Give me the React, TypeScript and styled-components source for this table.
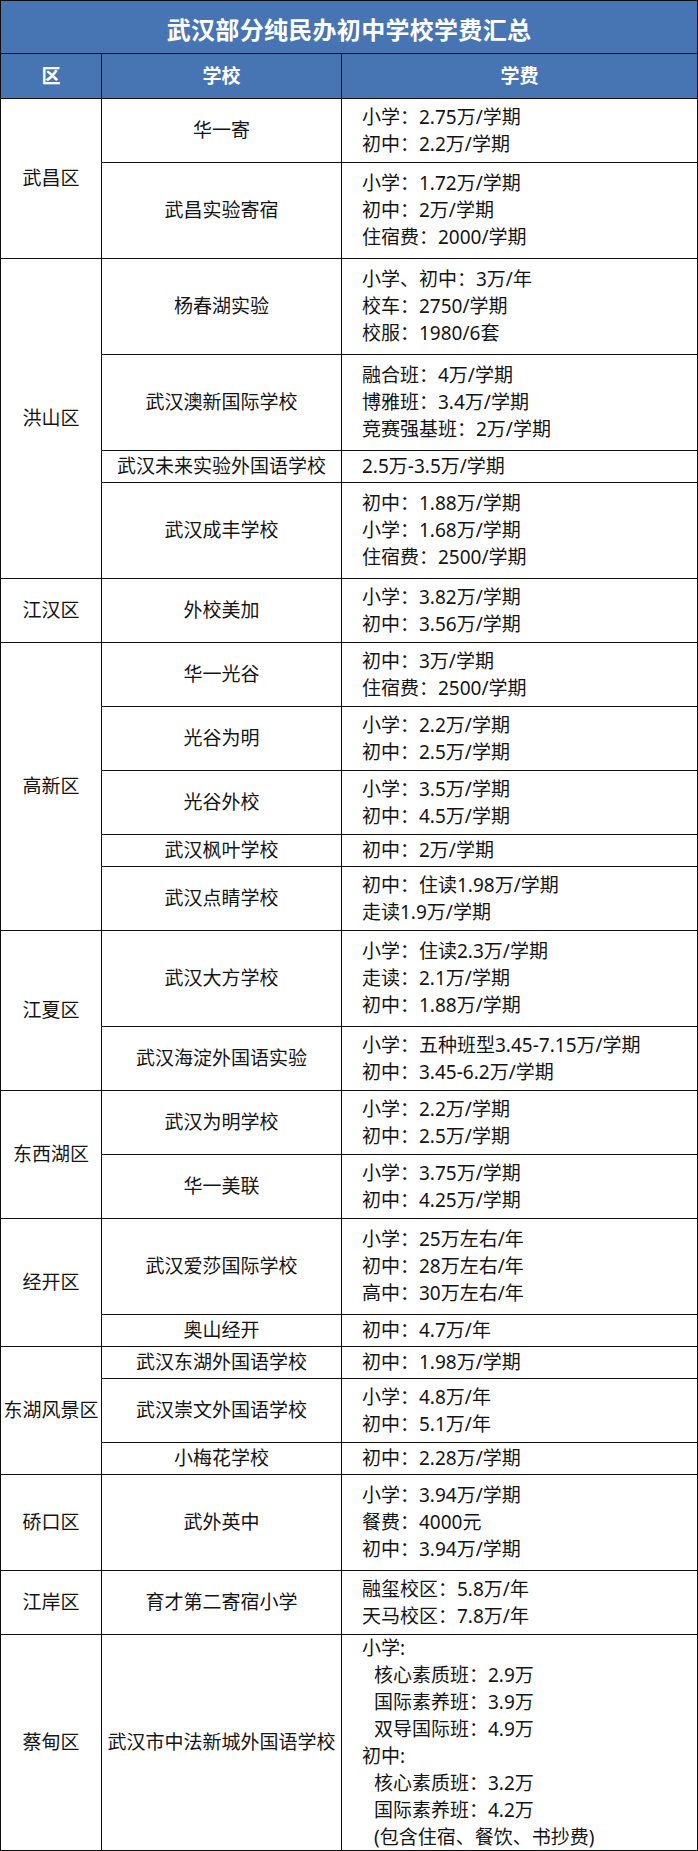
import React from "react";
import styled, { createGlobalStyle } from "styled-components";

const GlobalStyle = createGlobalStyle`
  html, body {
    margin: 0;
    padding: 0;
    background: #ffffff;
  }
  body {
    font-family: "Noto Sans", "Noto Sans CJK SC", sans-serif;
  }
`;

type School = {
  name: string;
  fees: string[];
  h: number; // row height incl. grid line, px
  tight?: boolean;
};

type District = {
  name: string;
  schools: School[];
};

const data: District[] = [
  {
    name: "武昌区",
    schools: [
      { name: "华一寄", fees: ["小学：2.75万/学期", "初中：2.2万/学期"], h: 64 },
      { name: "武昌实验寄宿", fees: ["小学：1.72万/学期", "初中：2万/学期", "住宿费：2000/学期"], h: 96 },
    ],
  },
  {
    name: "洪山区",
    schools: [
      { name: "杨春湖实验", fees: ["小学、初中：3万/年", "校车：2750/学期", "校服：1980/6套"], h: 96 },
      { name: "武汉澳新国际学校", fees: ["融合班：4万/学期", "博雅班：3.4万/学期", "竞赛强基班：2万/学期"], h: 96 },
      { name: "武汉未来实验外国语学校", fees: ["2.5万-3.5万/学期"], h: 32 },
      { name: "武汉成丰学校", fees: ["初中：1.88万/学期", "小学：1.68万/学期", "住宿费：2500/学期"], h: 96 },
    ],
  },
  {
    name: "江汉区",
    schools: [{ name: "外校美加", fees: ["小学：3.82万/学期", "初中：3.56万/学期"], h: 64 }],
  },
  {
    name: "高新区",
    schools: [
      { name: "华一光谷", fees: ["初中：3万/学期", "住宿费：2500/学期"], h: 64 },
      { name: "光谷为明", fees: ["小学：2.2万/学期", "初中：2.5万/学期"], h: 64 },
      { name: "光谷外校", fees: ["小学：3.5万/学期", "初中：4.5万/学期"], h: 64 },
      { name: "武汉枫叶学校", fees: ["初中：2万/学期"], h: 32 },
      { name: "武汉点睛学校", fees: ["初中：住读1.98万/学期", "走读1.9万/学期"], h: 64 },
    ],
  },
  {
    name: "江夏区",
    schools: [
      { name: "武汉大方学校", fees: ["小学：住读2.3万/学期", "走读：2.1万/学期", "初中：1.88万/学期"], h: 96 },
      { name: "武汉海淀外国语实验", fees: ["小学：五种班型3.45-7.15万/学期", "初中：3.45-6.2万/学期"], h: 64 },
    ],
  },
  {
    name: "东西湖区",
    schools: [
      { name: "武汉为明学校", fees: ["小学：2.2万/学期", "初中：2.5万/学期"], h: 64 },
      { name: "华一美联", fees: ["小学：3.75万/学期", "初中：4.25万/学期"], h: 64 },
    ],
  },
  {
    name: "经开区",
    schools: [
      { name: "武汉爱莎国际学校", fees: ["小学：25万左右/年", "初中：28万左右/年", "高中：30万左右/年"], h: 96 },
      { name: "奥山经开", fees: ["初中：4.7万/年"], h: 32 },
    ],
  },
  {
    name: "东湖风景区",
    schools: [
      { name: "武汉东湖外国语学校", fees: ["初中：1.98万/学期"], h: 32 },
      { name: "武汉崇文外国语学校", fees: ["小学：4.8万/年", "初中：5.1万/年"], h: 64 },
      { name: "小梅花学校", fees: ["初中：2.28万/学期"], h: 32 },
    ],
  },
  {
    name: "硚口区",
    schools: [{ name: "武外英中", fees: ["小学：3.94万/学期", "餐费：4000元", "初中：3.94万/学期"], h: 96 }],
  },
  {
    name: "江岸区",
    schools: [{ name: "育才第二寄宿小学", fees: ["融玺校区：5.8万/年", "天马校区：7.8万/年"], h: 64 }],
  },
  {
    name: "蔡甸区",
    schools: [
      {
        name: "武汉市中法新城外国语学校",
        fees: [
          "小学:",
          "  核心素质班：2.9万",
          "  国际素养班：3.9万",
          "  双导国际班：4.9万",
          "初中:",
          "  核心素质班：3.2万",
          "  国际素养班：4.2万",
          "  (包含住宿、餐饮、书抄费)",
        ],
        h: 216,
        tight: true,
      },
    ],
  },
];

const Sheet = styled.div`
  display: grid;
  grid-template-columns: 100px 239px 1fr;
  gap: 1px;
  padding: 1px;
  width: 698px;
  box-sizing: border-box;
  background: #0d0d0d;
  color: #141414;
  font-size: 19px;
  line-height: 27px;
`;

const TitleCell = styled.div`
  grid-column: 1 / -1;
  height: 52px;
  background: #4775b3;
  color: #ffffff;
  font-size: 24px;
  font-weight: 700;
  display: flex;
  align-items: center;
  justify-content: center;
  padding-top: 5px;
  box-sizing: border-box;
  letter-spacing: 0.3px;
`;

const HeadCell = styled.div`
  height: 44px;
  background: #4775b3;
  color: #ffffff;
  font-size: 19px;
  font-weight: 700;
  display: flex;
  align-items: center;
  justify-content: center;
`;

const DistrictCell = styled.div<{ $span: number }>`
  grid-column: 1;
  grid-row: span ${(p) => p.$span};
  background: #ffffff;
  display: flex;
  align-items: center;
  justify-content: center;
  white-space: nowrap;
`;

const SchoolCell = styled.div<{ $h: number }>`
  grid-column: 2;
  height: ${(p) => p.$h - 1}px;
  background: #ffffff;
  display: flex;
  align-items: center;
  justify-content: center;
  white-space: nowrap;
`;

const FeeCell = styled.div<{ $h: number }>`
  grid-column: 3;
  height: ${(p) => p.$h - 1}px;
  background: #ffffff;
  display: flex;
  flex-direction: column;
  justify-content: center;
  padding-left: 20px;
  box-sizing: border-box;
  white-space: nowrap;
`;

const FeeLine = styled.div<{ $indent?: boolean }>`
  padding-left: ${(p) => (p.$indent ? "12px" : "0")};
`;

export default function App() {
  return (
    <>
      <GlobalStyle />
      <Sheet>
        <TitleCell>武汉部分纯民办初中学校学费汇总</TitleCell>
        <HeadCell>区</HeadCell>
        <HeadCell>学校</HeadCell>
        <HeadCell>学费</HeadCell>
        {data.map((d) => (
          <React.Fragment key={d.name}>
            <DistrictCell $span={d.schools.length}>{d.name}</DistrictCell>
            {d.schools.map((s) => (
              <React.Fragment key={s.name}>
                <SchoolCell $h={s.h}>{s.name}</SchoolCell>
                <FeeCell $h={s.h}>
                  {s.fees.map((f, i) => (
                    <FeeLine key={i} $indent={f.startsWith("  ")}>
                      {f.trim()}
                    </FeeLine>
                  ))}
                </FeeCell>
              </React.Fragment>
            ))}
          </React.Fragment>
        ))}
      </Sheet>
    </>
  );
}
